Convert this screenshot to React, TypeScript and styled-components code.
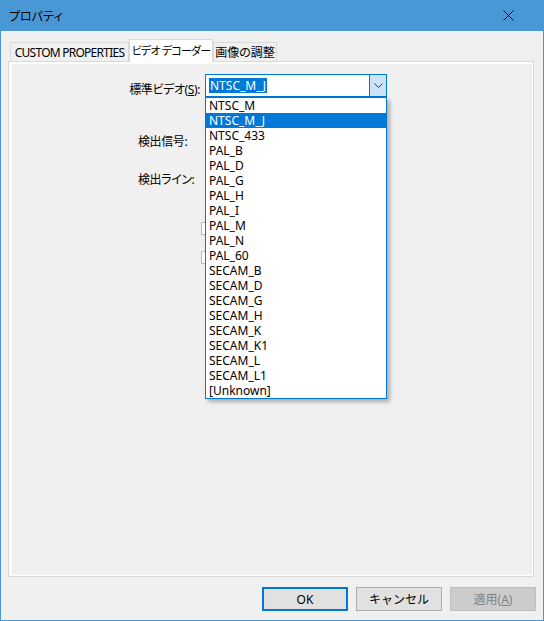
import styled, { createGlobalStyle } from "styled-components";

const GlobalStyle = createGlobalStyle`
  * { box-sizing: border-box; }
  html, body { margin: 0; padding: 0; background: #f0f0f0; }
  body {
    font-family: "Noto Sans", "Noto Sans CJK JP", sans-serif;
    font-size: 12px;
    color: #000000;
    font-feature-settings: "palt";
  }
`;

const standards = [
  "NTSC_M",
  "NTSC_M_J",
  "NTSC_433",
  "PAL_B",
  "PAL_D",
  "PAL_G",
  "PAL_H",
  "PAL_I",
  "PAL_M",
  "PAL_N",
  "PAL_60",
  "SECAM_B",
  "SECAM_D",
  "SECAM_G",
  "SECAM_H",
  "SECAM_K",
  "SECAM_K1",
  "SECAM_L",
  "SECAM_L1",
  "[Unknown]",
];

const selected = "NTSC_M_J";

const App = () => {
  return (
    <>
      <GlobalStyle />
      <StyledWindow>
        <StyledTitleBar>
          <StyledTitle>プロパティ</StyledTitle>
          <svg width="11" height="11" viewBox="0 0 11 11">
            <path d="M0.5 0.5 L10.5 10.5 M10.5 0.5 L0.5 10.5" stroke="#000" strokeWidth="1" />
          </svg>
        </StyledTitleBar>
        <StyledBody>
          <StyledTabStrip>
            <StyledTab $width={119} $spacing={-0.75}>
              CUSTOM PROPERTIES
            </StyledTab>
            <StyledTab $width={84} $spacing={-0.8} $size={11} $active>
              ビデオ デコーダー
            </StyledTab>
            <StyledTab $width={64}>画像の調整</StyledTab>
          </StyledTabStrip>
          <StyledPanel>
            <StyledPage>
              <StyledRow $top={10}>
                <StyledLabel $width={188} $align="right">
                  標準ビデオ(<u>S</u>):
                </StyledLabel>
                <StyledCombo>
                  <StyledComboField>
                    <StyledSelection>{selected}</StyledSelection>
                  </StyledComboField>
                  <StyledDropButton>
                    <svg width="9" height="5" viewBox="0 0 9 5">
                      <path d="M0.5 0.5 L4.5 4.5 L8.5 0.5" stroke="#3c3c3c" strokeWidth="1" fill="none" />
                    </svg>
                  </StyledDropButton>
                  <StyledList>
                    {standards.map((item) => (
                      <StyledItem key={item} $selected={item === selected}>
                        {item}
                      </StyledItem>
                    ))}
                  </StyledList>
                </StyledCombo>
              </StyledRow>
              <StyledRow $top={37}>
                <StyledLabel $width={188} $indent={126}>
                  検出信号:
                </StyledLabel>
              </StyledRow>
              <StyledRow $top={23}>
                <StyledLabel $width={188} $indent={126}>
                  検出ライン:
                </StyledLabel>
              </StyledRow>
              <StyledRow $top={35}>
                <StyledCheckBox />
              </StyledRow>
              <StyledRow $top={16}>
                <StyledCheckBox />
              </StyledRow>
            </StyledPage>
          </StyledPanel>
          <StyledButtonRow>
            <StyledButton $default>OK</StyledButton>
            <StyledButton>キャンセル</StyledButton>
            <StyledButton disabled>
              適用(<u>A</u>)
            </StyledButton>
          </StyledButtonRow>
        </StyledBody>
      </StyledWindow>
    </>
  );
};

const StyledWindow = styled.div`
  width: 544px;
  height: 621px;
  display: flex;
  flex-direction: column;
  background: #f0f0f0;
  border: 1px solid #4a97d6;
  border-top: none;
`;

const StyledTitleBar = styled.div`
  height: 31px;
  flex-shrink: 0;
  display: flex;
  align-items: center;
  justify-content: space-between;
  padding: 0 29px 0 8px;
  background: #4a97d6;
`;

const StyledTitle = styled.span`
  font-family: "Noto Sans CJK JP", sans-serif;
  font-size: 12px;
  color: #000000;
`;

const StyledBody = styled.div`
  flex: 1;
  display: flex;
  flex-direction: column;
  padding: 8px 7px 9px 7px;
`;

const StyledTabStrip = styled.div`
  display: flex;
  align-items: flex-end;
  height: 22px;
  padding-left: 2px;
  position: relative;
  z-index: 1;
`;

const StyledTab = styled.div<{
  $width: number;
  $active?: boolean;
  $spacing?: number;
  $size?: number;
}>`
  flex-shrink: 0;
  width: ${(p) => p.$width}px;
  height: ${(p) => (p.$active ? 23 : 19)}px;
  margin-bottom: ${(p) => (p.$active ? -1 : 0)}px;
  display: flex;
  align-items: center;
  justify-content: center;
  white-space: nowrap;
  font-size: ${(p) => p.$size ?? 12}px;
  letter-spacing: ${(p) => p.$spacing ?? 0}px;
  background: ${(p) => (p.$active ? "#ffffff" : "#f0f0f0")};
  border: 1px solid #d9d9d9;
  border-bottom: none;
  padding-bottom: ${(p) => (p.$active ? 2 : 0)}px;
`;

const StyledPanel = styled.div`
  flex: 1;
  display: flex;
  margin-right: 2px;
  background: #ffffff;
  border: 1px solid #d9d9d9;
  padding: 2px 1px 1px 3px;
`;

const StyledPage = styled.div`
  flex: 1;
  display: flex;
  flex-direction: column;
  background: #f0f0f0;
`;

const StyledRow = styled.div<{ $top: number }>`
  display: flex;
  align-items: flex-start;
  gap: 5px;
  margin-top: ${(p) => p.$top}px;
`;

const StyledLabel = styled.div<{ $width: number; $align?: string; $indent?: number }>`
  width: ${(p) => p.$width}px;
  text-align: ${(p) => p.$align ?? "left"};
  padding-left: ${(p) => p.$indent ?? 0}px;
  padding-top: ${(p) => (p.$align === "right" ? 8 : 0)}px;
  line-height: 15px;
  font-size: 12px;
  letter-spacing: -0.4px;
  white-space: nowrap;
`;

const StyledCombo = styled.div`
  position: relative;
  z-index: 2;
  width: 182px;
  height: 23px;
  display: flex;
  background: #ffffff;
  border: 1px solid #0078d7;
`;

const StyledComboField = styled.div`
  flex: 1;
  display: flex;
  align-items: center;
  padding-left: 3px;
`;

const StyledSelection = styled.span`
  background: #0078d7;
  color: #ffffff;
  line-height: 15px;
  padding: 0 1px;
`;

const StyledDropButton = styled.div`
  width: 17px;
  display: flex;
  align-items: center;
  justify-content: center;
  background: #cce4f7;
  border-left: 1px solid #0078d7;
`;

const StyledList = styled.div`
  position: absolute;
  top: 22px;
  left: -1px;
  right: -1px;
  display: flex;
  flex-direction: column;
  background: #ffffff;
  border: 1px solid #0078d7;
  box-shadow: 3px 3px 4px rgba(0, 0, 0, 0.28);
`;

const StyledItem = styled.div<{ $selected?: boolean }>`
  height: 15px;
  line-height: 15px;
  padding-left: 3px;
  font-size: 12px;
  white-space: nowrap;
  background: ${(p) => (p.$selected ? "#0078d7" : "transparent")};
  color: ${(p) => (p.$selected ? "#ffffff" : "#000000")};
`;

const StyledCheckBox = styled.div`
  width: 13px;
  height: 13px;
  margin-left: 189px;
  background: #ffffff;
  border: 1px solid #bcbcbc;
`;

const StyledButtonRow = styled.div`
  display: flex;
  justify-content: flex-end;
  gap: 8px;
  margin-top: 10px;
`;

const StyledButton = styled.button<{ $default?: boolean }>`
  width: 86px;
  height: 24px;
  padding: 0;
  font-family: "Noto Sans", "Noto Sans CJK JP", sans-serif;
  font-size: 12px;
  color: #000000;
  background: #e1e1e1;
  border: ${(p) => (p.$default ? "2px solid #0078d7" : "1px solid #adadad")};
  &:disabled {
    background: #cccccc;
    border-color: #bfbfbf;
    color: #838383;
  }
`;

export default App;
